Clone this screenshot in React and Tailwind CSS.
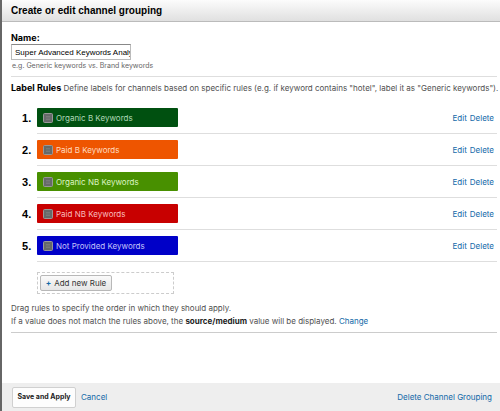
import { useState } from "react";

const rules = [
  { id: 1, label: "Organic B Keywords", color: "bg-[#005010]", text: "text-[#b0d8b8]" },
  { id: 2, label: "Paid B Keywords", color: "bg-[#ee5500]", text: "text-[#ffdcc0]" },
  { id: 3, label: "Organic NB Keywords", color: "bg-[#489000]", text: "text-[#def5c4]" },
  { id: 4, label: "Paid NB Keywords", color: "bg-[#c80000]", text: "text-[#f9bcbc]" },
  { id: 5, label: "Not Provided Keywords", color: "bg-[#0000c8]", text: "text-[#c4c4fa]" },
];

const GripIcon = () => (
  <svg width="10" height="10" viewBox="0 0 10 10" className="shrink-0" aria-hidden="true">
    <rect x="0.5" y="0.5" width="9" height="9" rx="1" fill="#666a6a" stroke="#989898" />
    <path d="M3 3.5h4M3 5h4M3 6.5h4" stroke="#858585" strokeWidth="0.6" />
  </svg>
);

const RuleRow = ({ rule }) => (
  <li className="flex h-8 items-center">
    <span className="w-[26px] shrink-0 pl-[11px] font-['Liberation_Sans',Arial,sans-serif] text-[11px] leading-4 font-bold text-black">{rule.id}.</span>
    <div className="flex h-8 flex-1 items-center justify-between border-b border-[#dedede] pr-[3px]">
      <div className={`flex h-[19px] w-[141px] items-center gap-[3px] rounded-[1px] pl-1.5 ${rule.color} ${rule.text}`}>
        <GripIcon />
        {rule.label}
      </div>
      <div className="flex gap-[3px] text-[#1269a8]">
        <a href="#edit">Edit</a>
        <a href="#delete">Delete</a>
      </div>
    </div>
  </li>
);

const App = () => {
  const [name, setName] = useState("Super Advanced Keywords Analysis");

  return (
    <div className="flex min-h-screen flex-col border-l-2 border-[#666] bg-white font-[Inter,Arial,sans-serif] text-[8px] text-[#505050]">
      {/* Header */}
      <header className="flex h-[22px] items-center border-b border-[#bbb] bg-linear-to-b from-[#fcfcfc] to-[#e0e0e0] pl-[9px]">
        <h1 className="font-['Liberation_Sans',Arial,sans-serif] text-[10px] font-bold text-black">Create or edit channel grouping</h1>
      </header>

      <main className="flex-1 pr-[3px] pl-[9px]">
        {/* Name */}
        <div className="flex flex-col items-start border-b border-[#dedede] pt-2.5 pb-1">
          <label htmlFor="name" className="text-[9px] leading-3 font-bold text-black">Name:</label>
          <input
            id="name"
            type="text"
            value={name}
            onChange={(e) => setName(e.target.value)}
            className="h-4 w-[120px] border border-[#bbb] border-t-[#888] bg-white pl-[3px] font-['Liberation_Sans',Arial,sans-serif] text-[8px] text-black"
          />
          <p className="pl-px text-[7px] leading-3 text-[#666]">e.g. Generic keywords vs. Brand keywords</p>
        </div>

        {/* Rules */}
        <p className="pt-[3px] pb-1.5 leading-4 whitespace-nowrap">
          <b className="text-[9px] text-black">Label Rules</b> Define labels for channels based on specific rules (e.g. if keyword contains "hotel", label it as "Generic keywords").
        </p>
        <ol>
          {rules.map((rule) => (
            <RuleRow key={rule.id} rule={rule} />
          ))}
        </ol>

        <div className="mt-2.5 ml-[26px] flex h-[22px] w-[137px] items-center border border-dashed border-[#ccc] pl-0.5">
          <button type="button" className="flex h-4 w-[72px] items-center justify-center gap-[3px] rounded-xs border border-[#b8b8b8] bg-linear-to-b from-[#fafafa] to-[#e6e6e6] text-[#333]">
            <b className="text-[#1269a8]">+</b>
            Add new Rule
          </button>
        </div>

        <div className="mt-2 border-b border-[#ccc] pb-1 leading-[13px]">
          <p>Drag rules to specify the order in which they should apply.</p>
          <p>
            If a value does not match the rules above, the <b className="text-[#222]">source/medium</b> value will be displayed.{" "}
            <a href="#change" className="text-[#1269a8]">Change</a>
          </p>
        </div>
      </main>

      {/* Footer */}
      <footer className="flex h-7 items-center justify-between bg-[#eee] pr-2 pl-2.5 text-[#1269a8]">
        <div className="flex items-center gap-[5px]">
          <button type="button" className="h-[21px] w-16 rounded-xs border border-[#d0d0d0] bg-[#fdfdfd] text-[7px] font-bold text-[#222]">
            Save and Apply
          </button>
          <a href="#cancel">Cancel</a>
        </div>
        <a href="#delete-grouping">Delete Channel Grouping</a>
      </footer>
    </div>
  );
};

export default App;
